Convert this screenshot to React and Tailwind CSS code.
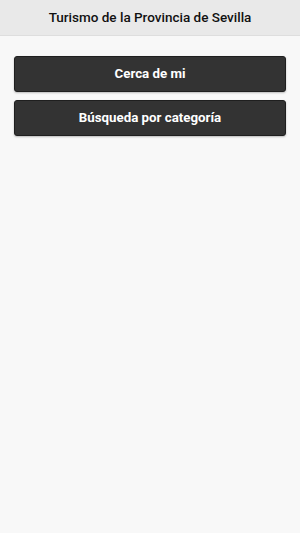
import React from "react";

export default function App() {
  const items = ["Cerca de mi", "Búsqueda por categoría"];

  return (
    <div className="min-h-[533px] bg-[#f8f8f8] font-['Roboto',sans-serif]">
      {/* Header */}
      <header className="h-[36px] bg-[#e9e9e9] border-b border-[#dedede] flex items-center justify-center">
        <h1 className="text-[13.5px] font-medium text-[#111]">
          Turismo de la Provincia de Sevilla
        </h1>
      </header>

      {/* Menu */}
      <div className="px-[14px] pt-[20px] flex flex-col gap-[8px]">
        {items.map((label) => (
          <button
            key={label}
            type="button"
            className="h-[36px] w-full rounded-[3px] bg-[#333333] border border-[#1f1f1f] shadow-[0_1px_2px_rgba(0,0,0,0.25)] text-white text-[13.3px] font-bold"
          >
            {label}
          </button>
        ))}
      </div>
    </div>
  );
}
